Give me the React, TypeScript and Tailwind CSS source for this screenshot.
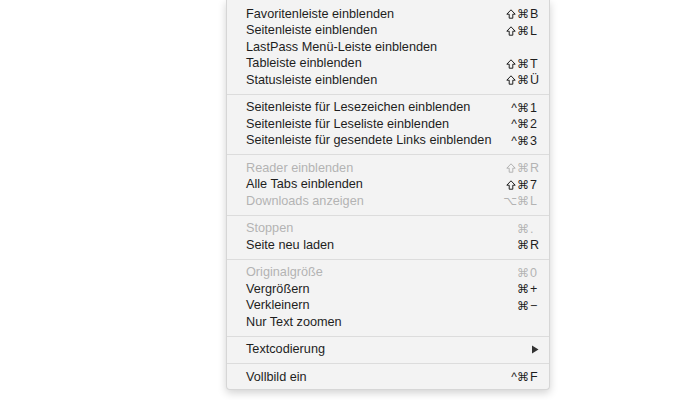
import React from "react";

type Item = { label: string; mods?: string; shift?: boolean; key?: string; disabled?: boolean; submenu?: boolean };

const groups: Item[][] = [
  [
    { label: "Favoritenleiste einblenden", shift: true, mods: "⌘", key: "B" },
    { label: "Seitenleiste einblenden", shift: true, mods: "⌘", key: "L" },
    { label: "LastPass Menü-Leiste einblenden" },
    { label: "Tableiste einblenden", shift: true, mods: "⌘", key: "T" },
    { label: "Statusleiste einblenden", shift: true, mods: "⌘", key: "Ü" },
  ],
  [
    { label: "Seitenleiste für Lesezeichen einblenden", mods: "^⌘", key: "1" },
    { label: "Seitenleiste für Leseliste einblenden", mods: "^⌘", key: "2" },
    { label: "Seitenleiste für gesendete Links einblenden", mods: "^⌘", key: "3" },
  ],
  [
    { label: "Reader einblenden", shift: true, mods: "⌘", key: "R", disabled: true },
    { label: "Alle Tabs einblenden", shift: true, mods: "⌘", key: "7" },
    { label: "Downloads anzeigen", mods: "⌥⌘", key: "L", disabled: true },
  ],
  [
    { label: "Stoppen", mods: "⌘", key: ".", disabled: true },
    { label: "Seite neu laden", mods: "⌘", key: "R" },
  ],
  [
    { label: "Originalgröße", mods: "⌘", key: "0", disabled: true },
    { label: "Vergrößern", mods: "⌘", key: "+" },
    { label: "Verkleinern", mods: "⌘", key: "−" },
    { label: "Nur Text zoomen" },
  ],
  [{ label: "Textcodierung", submenu: true }],
  [{ label: "Vollbild ein", mods: "^⌘", key: "F" }],
];

function ShiftIcon({ color }: { color: string }) {
  return (
    <svg width="10" height="10" viewBox="0 0 10 10" className="mr-[1px]">
      <path
        d="M5 0.8 L9.2 5.2 L6.8 5.2 L6.8 9.2 L3.2 9.2 L3.2 5.2 L0.8 5.2 Z"
        fill="none"
        stroke={color}
        strokeWidth="1"
        strokeLinejoin="round"
      />
    </svg>
  );
}

function Row({ item }: { item: Item }) {
  const color = item.disabled ? "#b3b3b3" : "#1e1e1e";
  return (
    <div
      className={`flex items-center h-[16.5px] pl-[19px] pr-[9px] ${
        item.disabled ? "text-[#b3b3b3]" : "text-[#1e1e1e]"
      }`}
    >
      <span className="flex-1 whitespace-nowrap">{item.label}</span>
      {item.submenu ? (
        <svg width="8" height="9" viewBox="0 0 8 9" className="mr-[1px]">
          <path d="M1 0.5 L7.5 4.5 L1 8.5 Z" fill="#333" />
        </svg>
      ) : item.key ? (
        <span className="flex items-center">
          {item.shift && <ShiftIcon color={color} />}
          <span className="text-right text-[12px]">{item.mods}</span>
          <span className="w-[11px] pl-[1px] text-[12.5px]">{item.key}</span>
        </span>
      ) : null}
    </div>
  );
}

export default function App() {
  return (
    <div
      className="w-[700px] h-[400px] bg-white overflow-hidden"
      style={{ fontFamily: '"Liberation Sans", "DejaVu Sans", sans-serif' }}
    >
      <div className="ml-[226px] w-[324px] bg-[#f3f3f3] border-x border-b border-[#d6d6d6] rounded-b-[4px] shadow-[0_3px_8px_rgba(0,0,0,0.18)] pt-[6px] pb-[3px] text-[12.7px] leading-none">
        {groups.map((g, gi) => (
          <div key={gi}>
            {gi > 0 && (
              <div className="h-[11px] flex items-center">
                <div className="w-full h-px bg-[#dcdcdc]" />
              </div>
            )}
            {g.map((it, i) => (
              <Row key={i} item={it} />
            ))}
          </div>
        ))}
      </div>
    </div>
  );
}
